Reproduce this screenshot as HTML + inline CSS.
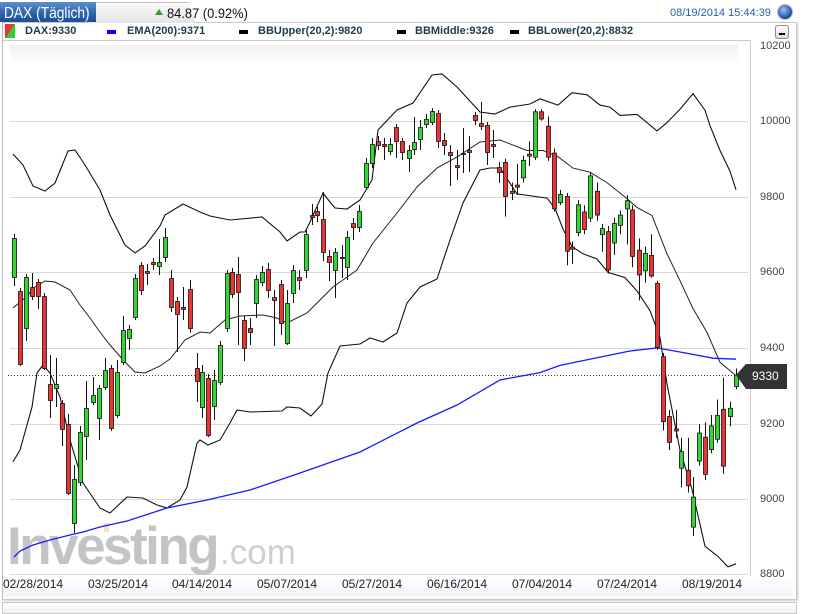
<!DOCTYPE html>
<html><head><meta charset="utf-8">
<style>
body{margin:0;width:814px;height:607px;background:#fff;overflow:hidden;font-family:"Liberation Sans",sans-serif;position:relative}
.tab{position:absolute;left:0;top:2px;width:96px;height:20px;background:linear-gradient(#5d8fc9,#2a62a8 60%,#1d4f92);}
.tabt{position:absolute;left:4px;top:3px;color:#fff;font-size:16px;line-height:18px;white-space:nowrap;transform:scaleX(0.86);transform-origin:0 0}
.tab2{position:absolute;left:88px;top:2px;width:108px;height:20px;background:linear-gradient(#fafafa,#e4e4e4);border-top:1px solid #bbb;clip-path:polygon(0 0,93% 0,100% 100%,0 100%)}
.chg{position:absolute;left:167px;top:5px;font-size:14px;color:#111;white-space:nowrap;transform:scaleX(0.92);transform-origin:0 0}
.date{position:absolute;left:670px;top:7px;font-size:11px;color:#2a5da8}
.dot{position:absolute;left:778px;top:5px;width:14px;height:14px;border-radius:50%;background:radial-gradient(circle at 40% 35%,#9cc0f0,#2856a8 60%,#0c2c6a);box-shadow:0 0 0 1px #bbb}
.panel{position:absolute;left:2px;top:22px;width:793px;height:576px;border:1px solid #c9c9c9;border-left:1px solid #bbb;box-shadow:1px 1px 2px #ccc}
.leg{position:absolute;top:25px;font-size:11px;font-weight:bold;color:#1d3b4a}
.sw{position:absolute;top:30px;width:9px;height:4px}
.btn{position:absolute;left:775px;top:25px;width:12px;height:12px;border:1px solid #888;border-radius:3px;background:linear-gradient(#fff,#ddd)}
.btn:after{content:"";position:absolute;left:3px;top:7px;width:6px;height:2px;background:#000}
.lab{position:absolute;font-size:11px;color:#444}
.xl{position:absolute;top:577px;font-size:12px;color:#222}
</style></head><body>
<div class="panel"></div>
<div class="tab2"></div>
<div class="tab"><div class="tabt">DAX (Täglich)</div></div>
<div style="position:absolute;left:155px;top:9px;width:0;height:0;border-left:4px solid transparent;border-right:4px solid transparent;border-bottom:6px solid #2e9e2e"></div>
<div class="chg">84.87 (0.92%)</div>
<div class="date">08/19/2014 15:44:39</div>
<div class="dot"></div>
<div style="position:absolute;left:5px;top:24px;width:10px;height:14px;background:linear-gradient(120deg,#e33 50%,#3c3 50%)"></div>
<div class="leg" style="left:25px">DAX:9330</div>
<div class="sw" style="left:107px;background:#00f"></div><div class="leg" style="left:127px">EMA(200):9371</div>
<div class="sw" style="left:239px;background:#000"></div><div class="leg" style="left:258px">BBUpper(20,2):9820</div>
<div class="sw" style="left:397px;background:#000"></div><div class="leg" style="left:415px">BBMiddle:9326</div>
<div class="sw" style="left:510px;background:#000"></div><div class="leg" style="left:528px">BBLower(20,2):8832</div>
<div class="btn"></div>
<div style="position:absolute;left:3px;top:40px;width:747px;height:537px;border-top:1px solid #ccc;border-right:1px solid #ccc"></div>
<svg id="c" width="814" height="607" style="position:absolute;left:0;top:0">
<defs><linearGradient id="g" x1="0" y1="0" x2="0" y2="1"><stop offset="0" stop-color="#f2f2f2"/><stop offset="1" stop-color="#fff"/></linearGradient>
<linearGradient id="g2" x1="0" y1="0" x2="0" y2="1"><stop offset="0" stop-color="#fff"/><stop offset="1" stop-color="#f0f4fa"/></linearGradient></defs>
<rect x="10" y="45" width="728" height="20" fill="url(#g)"/>
<rect x="3" y="576" width="790" height="20" fill="url(#g2)"/>
<g stroke="#d9d9d9" stroke-width="1">
<line x1="10" x2="748" y1="121.5" y2="121.5"/><line x1="10" x2="748" y1="197.5" y2="197.5"/><line x1="10" x2="748" y1="272.5" y2="272.5"/><line x1="10" x2="748" y1="348.5" y2="348.5"/><line x1="10" x2="748" y1="424.5" y2="424.5"/><line x1="10" x2="748" y1="499.5" y2="499.5"/><line x1="10" x2="748" y1="574.5" y2="574.5"/>
</g>
<text x="7" y="564" font-family="Liberation Sans,sans-serif" font-weight="bold" font-size="53" fill="#c4c4c4" letter-spacing="-2.5">Investing</text>
<text x="220" y="564" font-family="Liberation Sans,sans-serif" font-size="35" fill="#cfcfcf">.com</text>
<rect x="104" y="523" width="5" height="9" fill="#f5c98a" opacity="0.6"/>
<line x1="8" x2="748" y1="375.5" y2="375.5" stroke="#444" stroke-dasharray="1,2"/>
<g id="lines" fill="none" stroke-width="1.1"></g>
<g id="cd"></g>
<path d="M736 375 L746 364 H787 V389 H746 Z" fill="#333"/>
<text x="752" y="380" font-family="Liberation Sans,sans-serif" font-size="12" fill="#fff">9330</text>
</svg>
<div class="lab" style="left:760px;top:40px">10200</div>
<div class="lab" style="left:760px;top:115px">10000</div>
<div class="lab" style="left:760px;top:191px">9800</div>
<div class="lab" style="left:760px;top:266px">9600</div>
<div class="lab" style="left:760px;top:342px">9400</div>
<div class="lab" style="left:760px;top:418px">9200</div>
<div class="lab" style="left:760px;top:493px">9000</div>
<div class="lab" style="left:760px;top:568px">8800</div>
<div class="xl" style="left:3px">02/28/2014</div>
<div class="xl" style="left:88px">03/25/2014</div>
<div class="xl" style="left:172px">04/14/2014</div>
<div class="xl" style="left:257px">05/07/2014</div>
<div class="xl" style="left:342px">05/27/2014</div>
<div class="xl" style="left:427px">06/16/2014</div>
<div class="xl" style="left:512px">07/04/2014</div>
<div class="xl" style="left:597px">07/24/2014</div>
<div class="xl" style="left:682px">08/19/2014</div>
<div style="position:absolute;left:2px;top:602px;width:793px;height:10px;border:1px solid #c9c9c9;background:linear-gradient(#fff,#f2f2f2)"></div>
<script>
var up=[[13,154],[23,165],[33,186],[45,191],[55,183],[68,151],[75,150],[85,165],[100,190],[110,215],[125,245],[135,253],[145,246],[160,226],[165,215],[183,204],[200,212],[210,216],[230,220],[262,217],[280,232],[287,241],[300,232],[305,232],[310,222],[323,193],[330,202],[335,208],[347,209],[360,200],[372,180],[378,130],[397,110],[413,103],[432,75],[442,74],[457,87],[480,112],[495,114],[510,105],[530,102],[540,97],[558,103],[572,91],[587,93],[600,103],[610,105],[620,113],[637,112],[647,120],[657,128],[667,120],[680,107],[693,92],[705,108],[710,123],[720,147],[730,167],[736,185]];
var mid=[[13,308],[25,298],[35,287],[45,281],[55,282],[70,290],[80,305],[90,318],[100,332],[110,345],[125,362],[135,372],[145,373],[160,366],[170,359],[185,340],[200,332],[210,333],[225,320],[240,316],[263,315],[277,318],[287,323],[307,313],[320,300],[333,287],[357,270],[373,243],[397,213],[417,187],[437,168],[457,157],[480,142],[490,141],[500,140],[527,147],[543,147],[558,153],[573,164],[590,168],[607,178],[625,192],[637,202],[652,210],[667,247],[680,273],[693,300],[707,323],[720,352],[736,365]];
var lo=[[13,462],[20,450],[32,407],[37,373],[43,365],[50,373],[60,397],[70,440],[83,483],[100,508],[110,513],[127,497],[143,498],[157,505],[167,508],[180,500],[187,487],[197,443],[200,440],[208,445],[220,440],[230,423],[237,410],[250,412],[282,411],[287,407],[300,408],[311,416],[322,404],[328,373],[340,346],[360,344],[370,338],[383,342],[397,333],[407,303],[420,287],[437,279],[450,240],[463,203],[480,170],[490,168],[500,168],[517,189],[547,193],[555,203],[563,223],[572,240],[583,247],[597,252],[608,265],[625,270],[637,283],[650,302],[660,328],[667,373],[680,437],[692,475],[705,530],[718,540],[728,550],[736,547]];
var ema=[[14,557],[20,551],[33,545],[50,540],[70,535],[83,532],[100,527],[127,521],[167,508],[207,500],[250,490],[300,473],[360,452],[417,423],[457,405],[500,380],[540,362],[560,355],[600,347],[630,341],[657,338],[680,342],[713,348],[736,349]];
var K=3/2.904;function fy(x,y){return x>500?40+(y-40)*K:y;}
function fix(a){return a.map(function(q){return [q[0],fy(q[0],q[1]).toFixed(1)];});}
function pl(a,c,w){var p=document.createElementNS("http://www.w3.org/2000/svg","polyline");p.setAttribute("points",fix(a).map(function(q){return q.join(",")}).join(" "));p.setAttribute("stroke",c);p.setAttribute("stroke-width",w);document.getElementById("lines").appendChild(p);}
pl(up,"#111",1.1);pl(mid,"#222",1);pl(lo,"#111",1.1);pl(ema,"#1a1aff",1.3);
var C=[[14,238,277,1,234,286],[20,291,364,0,288,366],[26,277,328,1,274,341],[32,287,296,0,273,300],[38,282,296,0,279,309],[44,296,368,0,293,370],[50,384,400,0,355,418],[56,384,388,1,358,407],[62,403,429,0,400,446],[68,424,493,0,414,495],[74,479,523,1,465,533],[80,432,482,1,426,486],[86,408,436,1,381,460],[93,395,402,1,377,405],[99,388,418,1,385,440],[105,370,387,1,358,390],[111,368,428,0,365,431],[117,372,415,1,360,418],[123,330,362,1,316,365],[129,329,338,1,325,350],[135,278,317,1,274,320],[141,265,290,0,262,295],[147,271,273,0,264,285],[153,262,264,0,258,270],[159,262,266,1,239,275],[165,237,257,1,228,262],[171,278,307,0,270,312],[177,301,314,0,297,352],[183,307,309,0,287,320],[190,289,328,0,280,333],[197,368,381,0,353,402],[202,372,407,1,365,418],[208,378,435,0,374,437],[214,380,406,1,370,420],[220,345,382,1,341,385],[227,273,328,1,270,332],[232,272,294,0,268,298],[238,274,292,0,257,345],[244,320,348,0,316,361],[250,328,332,0,318,345],[256,279,303,1,275,318],[262,272,282,1,266,286],[268,269,290,0,263,298],[274,297,300,0,290,346],[281,284,323,0,280,335],[287,303,343,1,290,345],[293,270,293,1,265,303],[299,277,280,0,270,290],[306,234,270,1,230,278],[312,215,217,0,204,225],[317,211,215,0,207,222],[323,219,252,0,192,261],[329,256,262,0,250,281],[335,252,270,1,248,298],[342,257,258,0,245,278],[347,237,267,1,231,280],[353,223,227,0,218,240],[359,211,227,1,205,232],[366,163,187,1,158,190],[372,144,163,1,138,168],[378,141,145,0,136,150],[384,144,146,0,138,160],[390,144,151,1,138,155],[396,127,141,0,124,158],[402,141,152,0,138,160],[409,150,158,1,145,172],[414,142,149,1,117,155],[420,127,139,1,120,150],[426,119,124,1,114,128],[432,111,122,1,108,125],[438,113,141,0,110,148],[444,140,145,0,133,155],[450,152,155,0,145,186],[457,165,167,0,150,180],[463,153,154,1,128,173],[469,150,152,0,136,172],[475,115,120,0,112,125],[481,123,126,0,102,130],[487,125,152,0,122,165],[493,144,146,0,130,158],[499,167,172,0,162,183],[505,158,191,0,155,211],[512,186,188,0,178,195],[517,180,182,0,160,190],[523,156,173,1,152,178],[529,150,152,0,138,162],[535,109,153,1,107,156],[541,109,116,0,107,118],[548,123,153,0,114,157],[554,149,203,0,145,206],[560,189,197,1,185,200],[567,191,244,0,188,258],[572,240,242,0,235,257],[578,199,226,1,195,230],[584,206,223,0,200,228],[590,171,212,1,168,216],[597,186,209,0,178,215],[602,222,228,1,218,245],[608,225,262,0,220,266],[614,217,236,1,212,248],[620,209,219,1,205,228],[627,195,203,1,190,238],[632,204,249,0,200,260],[639,243,267,0,232,292],[645,246,263,1,240,275],[651,248,268,0,228,270],[657,275,337,0,273,340],[663,346,409,0,343,418],[669,404,429,0,398,437],[676,416,418,0,398,425],[681,438,454,1,425,473],[688,456,471,0,425,478],[693,482,511,1,463,520],[699,420,447,1,412,452],[705,424,460,0,410,466],[711,413,436,1,403,440],[717,403,426,1,388,430],[723,397,452,0,367,460],[730,396,404,1,390,414],[736,364,375,1,358,378]];
var g=document.getElementById("cd"),h="";
C.forEach(function(c){var x=c[0];var t=fy(x,c[1]),b=fy(x,c[2]),wh=fy(x,c[4]),wl=fy(x,c[5]);h+='<line x1="'+(x+0.5)+'" x2="'+(x+0.5)+'" y1="'+wh+'" y2="'+wl+'" stroke="#111" stroke-width="1"/>';var hh=Math.max(b-t,1);h+='<rect x="'+(x-1.5)+'" y="'+(t+0.5)+'" width="4" height="'+hh+'" fill="'+(c[3]?'#33d633':'#ee3333')+'" stroke="#111" stroke-width="0.8"/>';});
g.innerHTML=h;
</script>
</body></html>
